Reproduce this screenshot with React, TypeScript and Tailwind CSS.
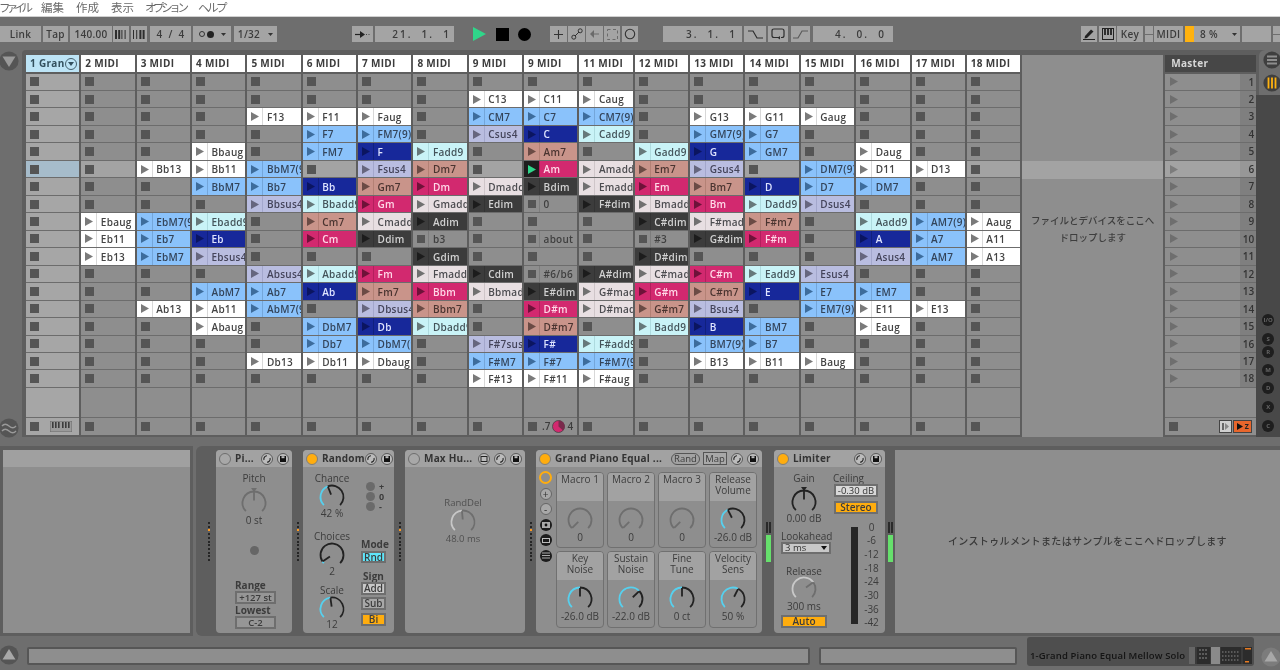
import React from "react";

const COLS: string[] = [
  "",
  "9:Ebaug:w|10:Eb11:w|11:Eb13:w",
  "6:Bb13:w|9:EbM7(9):b|10:Eb7:b|11:EbM7:b|14:Ab13:w",
  "5:Bbaug:w|6:Bb11:w|7:BbM7:b|9:Ebadd9:c|10:Eb:n|11:Ebsus4:l|13:AbM7:b|14:Ab11:w|15:Abaug:w",
  "3:F13:w|6:BbM7(9):b|7:Bb7:b|8:Bbsus4:l|12:Absus4:l|13:Ab7:b|14:AbM7(9):b|17:Db13:w",
  "3:F11:w|4:F7:b|5:FM7:b|7:Bb:n|8:Bbadd9:c|9:Cm7:s|10:Cm:p|12:Abadd9:c|13:Ab:n|15:DbM7:b|16:Db7:b|17:Db11:w",
  "3:Faug:w|4:FM7(9):b|5:F:n|6:Fsus4:l|7:Gm7:s|8:Gm:p|9:Cmadd9:m|10:Ddim:d|12:Fm:p|13:Fm7:s|14:Dbsus4:l|15:Db:n|16:DbM7(9):b|17:Dbaug:w",
  "5:Fadd9:c|6:Dm7:s|7:Dm:p|8:Gmadd9:m|9:Adim:d|10:b3:g|11:Gdim:d|12:Fmadd9:m|13:Bbm:p|14:Bbm7:s|15:Dbadd9:c",
  "2:C13:w|3:CM7:b|4:Csus4:l|7:Dmadd9:m|8:Edim:d|12:Cdim:d|13:Bbmadd9:m|16:F#7sus4:l|17:F#M7:b|18:F#13:w",
  "2:C11:w|3:C7:b|4:C:n|5:Am7:s|6:Am:a|7:Bdim:d|8:0:g|10:about:g|12:#6/b6:g|13:E#dim:d|14:D#m:p|15:D#m7:s|16:F#:n|17:F#7:b|18:F#11:w",
  "2:Caug:w|3:CM7(9):b|4:Cadd9:c|6:Amadd9:m|7:Emadd9:m|8:F#dim:d|12:A#dim:d|13:G#madd9:m|14:D#madd9:m|16:F#add9:c|17:F#M7(9):b|18:F#aug:w",
  "5:Gadd9:c|6:Em7:s|7:Em:p|8:Bmadd9:m|9:C#dim:d|10:#3:g|11:D#dim:d|12:C#madd9:m|13:G#m:p|14:G#m7:s|15:Badd9:c",
  "3:G13:w|4:GM7(9):b|5:G:n|6:Gsus4:l|7:Bm7:s|8:Bm:p|9:F#madd9:m|10:G#dim:d|12:C#m:p|13:C#m7:s|14:Bsus4:l|15:B:n|16:BM7(9):b|17:B13:w",
  "3:G11:w|4:G7:b|5:GM7:b|7:D:n|8:Dadd9:c|9:F#m7:s|10:F#m:p|12:Eadd9:c|13:E:n|15:BM7:b|16:B7:b|17:B11:w",
  "3:Gaug:w|6:DM7(9):b|7:D7:b|8:Dsus4:l|12:Esus4:l|13:E7:b|14:EM7(9):b|17:Baug:w",
  "5:Daug:w|6:D11:w|7:DM7:b|9:Aadd9:c|10:A:n|11:Asus4:l|13:EM7:b|14:E11:w|15:Eaug:w",
  "6:D13:w|9:AM7(9):b|10:A7:b|11:AM7:b|14:E13:w",
  "9:Aaug:w|10:A11:w|11:A13:w",
];

const STYLE: Record<string, { cell: string; arrow: string; sep: string }> = {
  w: { cell: "bg-[#ffffff] text-[#444444]", arrow: "#7a7a7a", sep: "border-[#d8d8d8]" },
  b: { cell: "bg-[#8ac2fb] text-[#33445a]", arrow: "#3d6c9c", sep: "border-[#74a6da]" },
  l: { cell: "bg-[#b9bde0] text-[#44445a]", arrow: "#66667e", sep: "border-[#a3a7cc]" },
  c: { cell: "bg-[#c9f3f7] text-[#44545a]", arrow: "#66787a", sep: "border-[#aedbdf]" },
  n: { cell: "bg-[#17289a] text-[#dfe4ff]", arrow: "#0b1560", sep: "border-[#10207e]" },
  p: { cell: "bg-[#d2296f] text-[#ffd9e8]", arrow: "#6e1239", sep: "border-[#b31f5d]" },
  a: { cell: "bg-[#d2296f] text-[#ffd9e8]", arrow: "#2fd68a", sep: "border-[#b31f5d]" },
  s: { cell: "bg-[#c9948a] text-[#4a3430]", arrow: "#6b4b45", sep: "border-[#b48175]" },
  m: { cell: "bg-[#e8dfe2] text-[#4c4c50]", arrow: "#707070", sep: "border-[#cfc6c9]" },
  d: { cell: "bg-[#3c3c3c] text-[#d2d2d2]", arrow: "#1c1c1c", sep: "border-[#333333]" },
  g: { cell: "bg-[#8e8e8e] text-[#404040]", arrow: "", sep: "border-[#7d7d7d]" },
};

function Arrow({ color, w = 8, h = 9 }: { color: string; w?: number; h?: number }) {
  return (
    <svg width={w} height={h} viewBox="0 0 8 9">
      <path d="M0 0 L8 4.5 L0 9 Z" fill={color} />
    </svg>
  );
}

const Stop = () => <div className="w-[9px] h-[9px] bg-[#555555] shrink-0" />;

function Clip({ label, type }: { label: string; type: string }) {
  const s = STYLE[type];
  return (
    <div className={`h-[17.47px] border-b border-[#6c6c6c] flex items-stretch overflow-hidden ${s.cell}`}>
      <div className={`w-[16px] shrink-0 flex items-center justify-start pl-[4px] border-r ${s.sep} ${type === "a" ? "bg-[#1e1e1e]" : ""}`}>
        {type === "g" ? <div className="w-[8px] h-[8px] bg-[#555555]" /> : <Arrow color={s.arrow} />}
      </div>
      <div className="pl-[3.5px] text-[10px] leading-[16px] tracking-[0.25px] whitespace-nowrap font-semibold pt-[0.5px]">
        {label}
      </div>
    </div>
  );
}

function Empty({ col, row }: { col: number; row: number }) {
  const bg =
    row === 6 ? (col === 0 ? "bg-[#a6bccb]" : "bg-[#a3a3a3]") : col === 0 ? "bg-[#a6a6a6]" : "bg-[#8e8e8e]";
  return (
    <div className={`h-[17.47px] border-b border-[#6c6c6c] flex items-center pl-[4px] ${bg}`}>
      <Stop />
    </div>
  );
}

function Column({ idx, data }: { idx: number; data: string }) {
  const map: Record<number, [string, string]> = {};
  data.split("|").forEach((e) => {
    if (!e) return;
    const [r, l, t] = e.split(":");
    map[Number(r)] = [l, t];
  });
  return (
    <div className="w-[55.35px] shrink-0 border-r-2 border-[#5e5e5e] flex flex-col">
      {idx === 0 ? (
        <div className="h-[17px] mb-[1.5px] bg-[#bde4f6] text-[#33505e] text-[10px] font-bold tracking-[0.3px] leading-[17px] pl-[4px] flex items-center justify-between pr-[2px]">
          <span>1 Gran</span>
          <span className="w-[12px] h-[12px] rounded-full border border-[#44606e] flex items-center justify-center">
            <svg width="6" height="4" viewBox="0 0 6 4"><path d="M0 0 H6 L3 4 Z" fill="#33505e" /></svg>
          </span>
        </div>
      ) : (
        <div className="h-[17px] mb-[1.5px] bg-white text-[#3c3c3c] text-[10px] font-bold tracking-[0.3px] leading-[17px] pl-[4px]">
          {idx === 9 ? "9 MIDI" : `${idx + 1} MIDI`}
        </div>
      )}
      {Array.from({ length: 18 }, (_, i) => i + 1).map((r) =>
        map[r] ? <Clip key={r} label={map[r][0]} type={map[r][1]} /> : <Empty key={r} col={idx} row={r} />
      )}
      <div className={`h-[30.5px] border-b border-[#6c6c6c] ${idx === 0 ? "bg-[#a6a6a6]" : "bg-[#8e8e8e]"}`} />
      <div className={`h-[17px] flex items-center pl-[4px] ${idx === 0 ? "bg-[#a6a6a6]" : "bg-[#8e8e8e]"} ${idx === 9 ? "gap-[3px]" : ""}`}>
        <Stop />
        {idx === 0 && (
          <svg className="ml-[11px]" width="22" height="11" viewBox="0 0 22 11">
            <rect width="22" height="11" fill="#9a9a9a" stroke="#6a6a6a" />
            {[2, 5, 8, 12, 15, 18].map((x) => (
              <rect key={x} x={x} y="1" width="1.6" height="6" fill="#3c3c3c" />
            ))}
          </svg>
        )}
        {idx === 9 && (
          <div className="flex items-center gap-[1.5px] text-[10px] text-[#3c3c3c] font-semibold ml-[2px]">
            <span>.7</span>
            <svg width="13" height="13" viewBox="0 0 13 13">
              <circle cx="6.5" cy="6.5" r="6" fill="#d2296f" stroke="#444" strokeWidth="0.8" />
              <path d="M6.5 6.5 V0.5 A6 6 0 0 1 11 10.5 Z" fill="#7a2a4c" />
            </svg>
            <span className="ml-[1px]">4</span>
          </div>
        )}
      </div>
    </div>
  );
}

function Btn({ w, ml = 2, children, cls = "justify-center" }: { w: number | string; ml?: number; children?: React.ReactNode; cls?: string }) {
  return (
    <div
      className={`h-[16px] shrink-0 bg-[#a4a4a4] flex items-center text-[10px] font-semibold text-[#3c3c3c] ${cls}`}
      style={{ width: w, marginLeft: ml }}
    >
      {children}
    </div>
  );
}

const Caret = () => (
  <svg width="5" height="3" viewBox="0 0 5 3"><path d="M0 0 H5 L2.5 3 Z" fill="#333" /></svg>
);

function Bars({ pattern }: { pattern: number[] }) {
  return (
    <svg width="13" height="9" viewBox="0 0 13 9">
      {pattern.map((w, i) => (
        <rect key={i} x={i * 3.2} y="0" width={w} height="9" fill="#2e2e2e" />
      ))}
    </svg>
  );
}

function Toolbar() {
  return (
    <div className="h-[33px] shrink-0 bg-[#6e6e6e] flex items-center pt-[1px] tracking-[0.3px]">
      <Btn w={41} ml={0}>Link</Btn>
      <Btn w={25}>Tap</Btn>
      <Btn w={42}>140.00</Btn>
      <Btn w={16} ml={1}><Bars pattern={[2, 2, 1, 1]} /></Btn>
      <Btn w={16}><Bars pattern={[1, 1, 2, 2]} /></Btn>
      <Btn w={41} ml={3}>4&nbsp;&nbsp;/&nbsp;&nbsp;4</Btn>
      <Btn w={38} ml={2} cls="justify-center gap-[1px]">
        <span className="w-[6px] h-[6px] rounded-full border border-[#333333]" />
        <span className="w-[7px] h-[7px] rounded-full bg-[#222222] ml-[1px] mr-[6px]" />
        <Caret />
      </Btn>
      <Btn w={43} ml={3} cls="justify-center gap-[8px]">1/32 <Caret /></Btn>
      <Btn w={21} ml={75}>
        <svg width="15" height="7" viewBox="0 0 15 7">
          <path d="M0 3.5 H6" stroke="#222" strokeWidth="1.2" />
          <path d="M5 0 L10 3.5 L5 7 Z" fill="#222" />
          <path d="M11 3.5 H12 M13.5 3.5 H14.5" stroke="#444" strokeWidth="1" />
        </svg>
      </Btn>
      <Btn w={79} cls="tracking-[2px] justify-end pr-[3px]">21.&nbsp;&nbsp;1.&nbsp;&nbsp;1</Btn>
      <svg className="ml-[19px] shrink-0" width="13" height="14" viewBox="0 0 13 14"><path d="M0 0 L13 7 L0 14 Z" fill="#2fd68a" /></svg>
      <div className="w-[13px] h-[13px] bg-black ml-[10px] shrink-0" />
      <div className="w-[13px] h-[13px] rounded-full bg-black ml-[9px] shrink-0" />
      <Btn w={17} ml={19}>
        <svg width="11" height="11" viewBox="0 0 11 11"><path d="M5.5 1 V10 M1 5.5 H10" stroke="#333" strokeWidth="1.1" /></svg>
      </Btn>
      <Btn w={17} ml={1}>
        <svg width="12" height="12" viewBox="0 0 12 12" fill="none" stroke="#333" strokeWidth="1">
          <circle cx="2.8" cy="9.2" r="2" /><circle cx="9.2" cy="2.8" r="2" /><path d="M4 8 L8 4" />
        </svg>
      </Btn>
      <Btn w={17} ml={1}>
        <svg width="10" height="8" viewBox="0 0 10 8"><path d="M4 0 L0 4 L4 8 Z M4 3.4 H9 V4.6 H4 Z" fill="#6a6a6a" /></svg>
      </Btn>
      <Btn w={16} ml={1}>
        <svg width="11" height="11" viewBox="0 0 11 11" fill="none" stroke="#6a6a6a" strokeWidth="1" strokeDasharray="3 2.5"><rect x="0.5" y="0.5" width="10" height="10" /></svg>
      </Btn>
      <Btn w={16} ml={2}>
        <svg width="12" height="12" viewBox="0 0 12 12"><circle cx="6" cy="6" r="4.7" fill="none" stroke="#333" strokeWidth="1.1" /></svg>
      </Btn>
      <Btn w={79} ml={25} cls="tracking-[2px] justify-end pr-[5px]">3.&nbsp;&nbsp;1.&nbsp;&nbsp;1</Btn>
      <Btn w={22} ml={2}>
        <svg width="15" height="9" viewBox="0 0 15 9" fill="none" stroke="#2e2e2e" strokeWidth="1.2"><path d="M0 1 H5 L9 8 H15" /></svg>
      </Btn>
      <Btn w={20} ml={2}>
        <svg width="14" height="12" viewBox="0 0 14 12" fill="none" stroke="#2e2e2e" strokeWidth="1.2"><path d="M8 9.5 H3 Q1 9.5 1 7.5 V3 Q1 1 3 1 H11 Q13 1 13 3 V7.5 Q13 9.5 11 9.5 H10" /><path d="M9 8 V11.5 L6.5 9.7 Z" fill="#2e2e2e" stroke="none" /></svg>
      </Btn>
      <Btn w={19} ml={3}>
        <svg width="15" height="9" viewBox="0 0 15 9" fill="none" stroke="#5a5a5a" strokeWidth="1.2"><path d="M0 8 H5 L9 1 H15" /></svg>
      </Btn>
      <Btn w={80} ml={3} cls="tracking-[2px] justify-end pr-[7px]">4.&nbsp;&nbsp;0.&nbsp;&nbsp;0</Btn>
      <Btn w={16} ml={188}>
        <svg width="12" height="12" viewBox="0 0 12 12"><path d="M2 8 L8 1.5 L10.5 3.5 L4 10 L1.5 10.5 Z" fill="#222" /><path d="M0 11.5 H12" stroke="#222" /></svg>
      </Btn>
      <Btn w={17}>
        <svg width="12" height="12" viewBox="0 0 12 12"><rect x="0.5" y="0.5" width="11" height="11" fill="none" stroke="#222" /><path d="M3 1 V7 M6 1 V7 M9 1 V7" stroke="#222" strokeWidth="1.8" /></svg>
      </Btn>
      <Btn w={26} ml={1}>Key</Btn>
      <div className="w-[8px] ml-[2px] h-[16px] flex flex-col shrink-0 gap-[1px]">
        <div className="h-[7.5px] bg-[#a4a4a4]" />
        <div className="h-[7.5px] bg-[#a4a4a4]" />
      </div>
      <Btn w={29} ml={1}>MIDI</Btn>
      <div className="w-[9px] h-[16px] bg-[#ffb20f] ml-[2px] shrink-0" />
      <Btn w={46} ml={0} cls="justify-between pl-[6px] pr-[3px]"><span>8 %</span><Caret /></Btn>
      <Btn w={29} ml={2} />
      <div className="w-[7px] ml-[2px] h-[16px] flex flex-col shrink-0 gap-[1px]">
        <div className="h-[7.5px] bg-[#a4a4a4]" />
        <div className="h-[7.5px] bg-[#a4a4a4]" />
      </div>
    </div>
  );
}

function Circle({ size = 20, dir = "down", bg = "#555555" }: { size?: number; dir?: "down" | "up" | "wave"; bg?: string }) {
  return (
    <svg width={size} height={size} viewBox="0 0 20 20">
      <circle cx="10" cy="10" r="9.6" fill={bg} />
      {dir === "down" && <path d="M3.5 5.5 H16.5 L10 16 Z" fill="#9a9a9a" />}
      {dir === "up" && <path d="M3.5 14.5 H16.5 L10 4 Z" fill="#a8a8a8" />}
      {dir === "wave" && (
        <path d="M3 8 Q6 4.5 10 8 T17 8 M3 13 Q6 9.5 10 13 T17 13" fill="none" stroke="#9a9a9a" strokeWidth="1.4" />
      )}
    </svg>
  );
}

function Master() {
  return (
    <div className="w-[91px] shrink-0 flex flex-col">
      <div className="h-[17px] mb-[1.5px] bg-[#474747] text-[#d8d8d8] text-[10px] font-bold leading-[17px] pl-[6px] tracking-[0.3px]">Master</div>
      {Array.from({ length: 18 }, (_, i) => i + 1).map((r) => (
        <div key={r} className={`h-[17.47px] border-b border-[#6c6c6c] flex items-center justify-between ${r === 6 ? "bg-[#a3a3a3]" : "bg-[#8e8e8e]"}`}>
          <div className="pl-[5px]"><Arrow color={r === 6 ? "#7c7c7c" : "#6e6e6e"} /></div>
          <div className={`w-[16px] h-full text-right pr-[2px] text-[10px] leading-[17px] font-semibold text-[#333333] ${r === 6 ? "bg-[#979797]" : "bg-[#7f7f7f]"}`}>{r}</div>
        </div>
      ))}
      <div className="h-[30.5px] border-b border-[#6c6c6c] bg-[#8e8e8e]" />
      <div className="h-[17px] bg-[#8e8e8e] flex items-center pl-[4px]">
        <Stop />
        <div className="w-[13px] h-[13px] ml-[41px] border border-[#444444] bg-[#cfcfcf] flex items-center justify-center">
          <svg width="8" height="7" viewBox="0 0 8 7"><rect width="2" height="7" fill="#666" /><path d="M3 0 L7 3.5 L3 7 Z" fill="#888" /></svg>
        </div>
        <div className="w-[19px] h-[13px] ml-[1px] border border-[#444444] bg-[#e8662c] flex items-center justify-center gap-[2px]">
          <svg width="6" height="7" viewBox="0 0 6 7"><path d="M0 0 L6 3.5 L0 7 Z" fill="#111" /></svg>
          <span className="text-[7px] leading-none text-[#222222] font-bold">Z</span>
        </div>
      </div>
    </div>
  );
}

function SmallDot({ t }: { t: string }) {
  return (
    <div className="w-[12px] h-[12px] rounded-full bg-[#1e1e1e] text-[#666666] text-[6px] font-bold flex items-center justify-center leading-none">{t}</div>
  );
}

function Session() {
  return (
    <div className="h-[387px] shrink-0 flex bg-[#6e6e6e]">
      <div className="w-[22px] shrink-0 flex flex-col items-start justify-between pt-[1px]">
        <div className="ml-[-1px]"><Circle dir="down" /></div>
        <div className="mb-[-1px] ml-[-1px]"><Circle dir="wave" /></div>
      </div>
      <div className="flex-1 flex bg-[#5e5e5e] rounded-tl-[4px] pt-[5px] pl-[4px]">
        {COLS.map((d, i) => (
          <Column key={i} idx={i} data={d} />
        ))}
        <div className="w-[141px] shrink-0 bg-[#8e8e8e] flex flex-col">
          <div className="mt-[106px] h-[17.5px] bg-[#a3a3a3]" />
          <div className="mt-[33px] text-center text-[9.5px] leading-[17px] text-[#3e3e3e] font-medium">
            ファイルとデバイスをここへ<br />ドロップします
          </div>
        </div>
        <div className="w-[2px] shrink-0" />
        <Master />
        <div className="flex-1 -mt-[5px] flex flex-col">
          <div className="h-[45px] bg-[#6e6e6e] rounded-tl-[6px] ml-[3px] pl-[4px] pt-[1px] flex flex-col gap-[5px]">
            <svg width="18" height="18" viewBox="0 0 18 18"><circle cx="9" cy="9" r="8.6" fill="#3f3f3f" /><path d="M4 5.5 H14 M4 9 H14 M4 12.5 H14" stroke="#8e8e8e" strokeWidth="1.8" /></svg>
            <svg width="18" height="18" viewBox="0 0 18 18"><circle cx="9" cy="9" r="8.6" fill="#3f3f3f" /><path d="M5.5 3.5 V14.5 M9 3.5 V14.5 M12.5 3.5 V14.5" stroke="#ffb20f" strokeWidth="1.8" /></svg>
          </div>
          <div className="flex-1 bg-[#484848] pl-[6px] pt-[219px] flex flex-col">
            <SmallDot t="I/O" />
            <div className="mt-[7px]"><SmallDot t="S" /></div>
            <div className="mt-[1px]"><SmallDot t="R" /></div>
            <div className="mt-[6px]"><SmallDot t="M" /></div>
            <div className="mt-[6px]"><SmallDot t="D" /></div>
            <div className="mt-[7px]"><SmallDot t="X" /></div>
            <div className="mt-[7px]"><SmallDot t="C" /></div>
          </div>
        </div>
      </div>
    </div>
  );
}

function pt(c: number, r: number, a: number) {
  const t = (a * Math.PI) / 180;
  return [c + r * Math.sin(t), c - r * Math.cos(t)];
}
function arc(c: number, r: number, a: number, b: number) {
  const [x1, y1] = pt(c, r, a);
  const [x2, y2] = pt(c, r, b);
  return `M${x1.toFixed(2)} ${y1.toFixed(2)} A${r} ${r} 0 ${b - a > 180 ? 1 : 0} 1 ${x2.toFixed(2)} ${y2.toFixed(2)}`;
}

function Knob({ v = 0, track = "#222222", fill = "#56d0ee", needle = "#222222", mark = false }: { v?: number; track?: string; fill?: string; needle?: string; mark?: boolean }) {
  const c = 13, r = 11.5;
  const a = -135 + 270 * v;
  const [nx, ny] = pt(c, r - 0.5, a);
  const [sx, sy] = pt(c, 2.5, a);
  return (
    <svg width="26" height="26" viewBox="0 0 26 26" className="shrink-0 block overflow-visible">
      {v > 0 && <path d={arc(c, r, -135, a)} fill="none" stroke={fill} strokeWidth="1.8" />}
      <path d={arc(c, r, a, 135)} fill="none" stroke={track} strokeWidth="1.8" />
      <path d={`M${sx} ${sy} L${nx} ${ny}`} stroke={needle} strokeWidth="1.8" />
      {mark && <path d="M10 -2 H16 L13 2 Z" fill={needle} />}
    </svg>
  );
}

function IconHot() {
  return (
    <svg width="12" height="12" viewBox="0 0 12 12" className="shrink-0">
      <circle cx="6" cy="6" r="5.5" fill="#bcbcbc" stroke="#444" strokeWidth="0.8" />
      <path d="M3 7 A3.2 3.2 0 0 1 6 2.8 M9 5 A3.2 3.2 0 0 1 6 9.2" fill="none" stroke="#222" strokeWidth="1.1" />
    </svg>
  );
}
function IconSave() {
  return (
    <svg width="12" height="12" viewBox="0 0 12 12" className="shrink-0">
      <circle cx="6" cy="6" r="5.5" fill="#bcbcbc" stroke="#444" strokeWidth="0.8" />
      <rect x="3" y="3" width="6" height="6" fill="#111" />
      <rect x="4.5" y="3.2" width="3" height="2" fill="#bcbcbc" />
    </svg>
  );
}

function DevHead({ title, on, children }: { title: string; on?: boolean; children?: React.ReactNode }) {
  return (
    <div className="h-[17px] shrink-0 bg-[#a2a2a2] rounded-t-[4px] flex items-center pl-[3px] pr-[3px]">
      <div className={`w-[12px] h-[12px] rounded-full shrink-0 border ${on ? "bg-[#ffad0e] border-[#7e7e7e]" : "bg-[#a8a8a8] border-[#6e6e6e]"}`} />
      <div className="ml-[4px] text-[10px] font-bold text-[#333333] whitespace-nowrap tracking-[0.2px]">{title}</div>
      <div className="ml-auto flex items-center gap-[4px]">{children}</div>
    </div>
  );
}

function T({ children, cls = "", weight = "font-medium", color = "text-[#3c3c3c]", size = "text-[10px]", lead = "leading-[12px]", align = "text-center" }: { children: React.ReactNode; cls?: string; weight?: string; color?: string; size?: string; lead?: string; align?: string }) {
  return <div className={`${size} ${lead} ${color} ${weight} ${align} whitespace-nowrap ${cls}`}>{children}</div>;
}

function Dots() {
  return (
    <div className="flex flex-col items-center gap-[1.7px]">
      {Array.from({ length: 11 }, (_, i) => (
        <div key={i} className={`w-[2px] h-[2px] ${i === 2 ? "bg-[#ff9a20]" : "bg-[#262626]"}`} />
      ))}
    </div>
  );
}

function GreenMeter() {
  return (
    <div className="flex gap-[1px] h-[40px] flex-col items-center">
      <div className="flex gap-[1px]">
        <div className="w-[2px] h-[11px] bg-[#2a2a2a]" />
        <div className="w-[2px] h-[11px] bg-[#2a2a2a]" />
      </div>
      <div className="w-[5px] h-[27px] bg-[#66e06c] mt-[1px]" />
    </div>
  );
}

function Pitch() {
  return (
    <div className="w-[76px] shrink-0 bg-[#8e8e8e] rounded-[4px] flex flex-col">
      <DevHead title="Pi..."><IconHot /><IconSave /></DevHead>
      <div className="flex flex-col items-center pt-[5px] flex-1">
        <T>Pitch</T>
        <div className="mt-[6px]"><Knob v={0.5} track="#6e6e6e" fill="#6e6e6e" needle="#6e6e6e" mark /></div>
        <T cls="-mt-[2px]">0 st</T>
        <div className="w-[9px] h-[9px] rounded-full bg-[#666666] mt-[20px]" />
        <div className="mt-[24px] self-start ml-[19px] flex flex-col items-start">
          <T weight="font-bold">Range</T>
          <div className="w-[41px] h-[13px] border-2 border-[#6e6e6e] bg-[#969696] text-[9.5px] leading-[10px] text-center font-semibold text-[#3c3c3c]">+127 st</div>
          <T weight="font-bold">Lowest</T>
          <div className="w-[41px] h-[13px] border-2 border-[#6e6e6e] bg-[#969696] text-[9.5px] leading-[10px] text-center font-semibold text-[#3c3c3c]">C-2</div>
        </div>
      </div>
    </div>
  );
}

function SmBtn({ children, bg }: { children: React.ReactNode; bg: string }) {
  return <div className={`w-[25px] h-[12.5px] border-2 border-[#6e6e6e] text-[10px] leading-[8.5px] text-center font-semibold text-[#3c3c3c] ${bg}`}>{children}</div>;
}

function Random() {
  return (
    <div className="w-[91px] shrink-0 bg-[#8e8e8e] rounded-[4px] flex flex-col">
      <DevHead title="Random" on><IconHot /><IconSave /></DevHead>
      <div className="flex flex-1">
        <div className="w-[58px] flex flex-col items-center pt-[5px]">
          <T>Chance</T>
          <Knob v={0.42} />
          <T cls="-mt-[3px]">42 %</T>
          <T cls="mt-[11px]">Choices</T>
          <Knob v={0.04} />
          <T cls="-mt-[3px]">2</T>
          <T cls="mt-[7px]">Scale</T>
          <Knob v={0.47} />
          <T cls="-mt-[4px]">12</T>
        </div>
        <div className="flex-1 flex flex-col items-start pt-[15px]">
          <div className="flex flex-col gap-[0.5px] ml-[5px]">
            {["+", "0", "-"].map((s) => (
              <div key={s} className="flex items-center gap-[4px] h-[9.5px]">
                <div className="w-[9px] h-[9px] rounded-full bg-[#6a6a6a]" />
                <span className="text-[9px] leading-[9px] font-bold text-[#3c3c3c]">{s}</span>
              </div>
            ))}
          </div>
          <T cls="mt-[26px] w-[25px]" weight="font-bold">Mode</T>
          <div className="mt-[1px]"><SmBtn bg="bg-[#5fe6fb]">Rnd</SmBtn></div>
          <T cls="mt-[6.5px] w-[25px]" weight="font-bold">Sign</T>
          <div className="mt-[0.5px]"><SmBtn bg="bg-[#c8c8c8]">Add</SmBtn></div>
          <div className="mt-[2.5px]"><SmBtn bg="bg-[#a8a8a8]">Sub</SmBtn></div>
          <div className="mt-[3.5px]"><SmBtn bg="bg-[#ffad0e]">Bi</SmBtn></div>
        </div>
      </div>
    </div>
  );
}

function MaxHu() {
  return (
    <div className="w-[120px] shrink-0 bg-[#8e8e8e] rounded-[4px] flex flex-col">
      <DevHead title="Max Hu...">
        <svg width="12" height="12" viewBox="0 0 12 12" className="shrink-0"><circle cx="6" cy="6" r="5.5" fill="#bcbcbc" stroke="#444" strokeWidth="0.8" /><rect x="3" y="3.5" width="6" height="5" fill="none" stroke="#222" /></svg>
        <IconHot /><IconSave />
      </DevHead>
      <div className="flex flex-col items-center pt-[30px] pr-[4px]">
        <T color="text-[#505050]" size="text-[9.5px]">RandDel</T>
        <Knob v={0.48} track="#6e6e6e" fill="#c8c8c8" needle="#6e6e6e" />
        <T cls="-mt-[2px]" color="text-[#505050]" size="text-[9.5px]">48.0 ms</T>
      </div>
    </div>
  );
}

function Macro({ top, value, v, cyan }: { top: string[]; value: string; v?: number; cyan?: boolean }) {
  return (
    <div className="w-[48px] border-[1.5px] border-[#707070] rounded-[4px] overflow-hidden flex flex-col bg-[#8e8e8e]">
      <div className="h-[28px] bg-[#a2a2a2] flex flex-col items-center pt-[0.5px]">
        {top.map((t) => (
          <T key={t} lead="leading-[11px]">{t}</T>
        ))}
      </div>
      <div className="flex flex-col items-center pt-[5.5px]">
        {cyan ? <Knob v={v} /> : <Knob v={0} track="#6e6e6e" needle="#6e6e6e" />}
        <T cls="-mt-[2px]">{value}</T>
      </div>
    </div>
  );
}

function RailDot({ children, light }: { children?: React.ReactNode; light?: boolean }) {
  return (
    <div className={`w-[12px] h-[12px] rounded-full flex items-center justify-center ${light ? "bg-[#a8a8a8] border border-[#666666]" : "bg-[#1c1c1c]"}`}>{children}</div>
  );
}

function Piano() {
  return (
    <div className="w-[226px] shrink-0 bg-[#8e8e8e] rounded-[4px] flex flex-col">
      <DevHead title="Grand Piano Equal ..." on>
        <div className="ml-[-2px] w-[29px] h-[12px] rounded-full border border-[#555555] text-[9.5px] leading-[10px] text-center font-medium text-[#3c3c3c]">Rand</div>
        <div className="w-[24px] h-[13px] border border-[#555555] bg-[#a8a8a8] text-[9.5px] leading-[11px] text-center font-medium text-[#3c3c3c] -ml-[1px]">Map</div>
        <IconHot /><IconSave />
      </DevHead>
      <div className="flex flex-1 pt-[5px]">
        <div className="w-[20px] pl-[1px] pr-[2px] flex flex-col items-center gap-[3.5px] -mt-[1px]">
          <div className="w-[13px] h-[13px] rounded-full border-2 border-[#ffad0e] shrink-0" />
          <RailDot light><span className="text-[10px] leading-none text-[#333333]">+</span></RailDot>
          <RailDot light><span className="text-[10px] leading-none text-[#333333]">-</span></RailDot>
          <RailDot><svg width="8" height="7" viewBox="0 0 8 7"><rect x="0" y="1" width="8" height="6" fill="#aaa" /><circle cx="4" cy="4" r="1.4" fill="#111" /></svg></RailDot>
          <RailDot><div className="w-[8px] h-[5px] border border-[#bbbbbb]" /></RailDot>
          <RailDot><svg width="8" height="7" viewBox="0 0 8 7"><path d="M0 1 H8 M0 3.5 H8 M0 6 H8" stroke="#aaa" /></svg></RailDot>
        </div>
        <div className="grid grid-cols-[48px_48px_48px_48px] grid-rows-[76px_77px] gap-x-[3px] gap-y-[3px]">
          <Macro top={["Macro 1"]} value="0" />
          <Macro top={["Macro 2"]} value="0" />
          <Macro top={["Macro 3"]} value="0" />
          <Macro top={["Release", "Volume"]} value="-26.0 dB" v={0.4} cyan />
          <Macro top={["Key", "Noise"]} value="-26.0 dB" v={0.5} cyan />
          <Macro top={["Sustain", "Noise"]} value="-22.0 dB" v={0.67} cyan />
          <Macro top={["Fine", "Tune"]} value="0 ct" v={0.5} cyan />
          <Macro top={["Velocity", "Sens"]} value="50 %" v={0.6} cyan />
        </div>
      </div>
    </div>
  );
}

function Limiter() {
  const scale = ["0", "-6", "-12", "-18", "-24", "-30", "-36", "-42"];
  return (
    <div className="w-[111px] shrink-0 bg-[#8e8e8e] rounded-[4px] flex flex-col">
      <DevHead title="Limiter" on><IconHot /><IconSave /></DevHead>
      <div className="flex flex-1">
        <div className="w-[59px] pl-[7px] flex flex-col pt-[5px]">
          <div className="w-[46px] flex flex-col items-center">
            <T>Gain</T>
            <div className="mt-[5px]"><Knob v={0.5} mark track="#222222" fill="#222222" /></div>
            <T cls="-mt-[3px]">0.00 dB</T>
          </div>
          <T cls="mt-[6px]" align="text-left">Lookahead</T>
          <div className="w-[50px] h-[12px] border-2 border-[#6e6e6e] bg-[#c8c8c8] flex items-center justify-between px-[2px] text-[9.5px] leading-none text-[#333333] font-medium">
            3 ms <svg width="6" height="4" viewBox="0 0 6 4"><path d="M0 0 H6 L3 4 Z" fill="#111" /></svg>
          </div>
          <div className="w-[46px] flex flex-col items-center mt-[11px]">
            <T>Release</T>
            <div className="-mt-[1px]"><Knob v={0.7} track="#6e6e6e" fill="#c8c8c8" needle="#6e6e6e" /></div>
            <T cls="-mt-[2px]">300 ms</T>
          </div>
          <div className="mt-[3px] w-[46px] h-[13px] border-2 border-[#6e6e6e] bg-[#ffad0e] text-[10px] leading-[9px] text-center font-semibold text-[#3c3c3c]">Auto</div>
        </div>
        <div className="flex-1 flex flex-col pt-[5px]">
          <T align="text-left">Ceiling</T>
          <div className="w-[44px] ml-[1px] h-[13px] border-2 border-[#6e6e6e] bg-[#d8d8d8] text-[9.5px] leading-[9px] text-center font-medium text-[#333333]">-0.30 dB</div>
          <div className="w-[44px] ml-[1px] h-[13px] border-2 border-[#6e6e6e] bg-[#ffad0e] text-[10px] leading-[9px] text-center font-semibold text-[#3c3c3c] mt-[4px]">Stereo</div>
          <div className="flex mt-[13px] pl-[18px]">
            <div className="w-[7px] h-[97px] bg-[#262626] shrink-0" />
            <div className="ml-[5px] w-[17px] flex flex-col items-center justify-between -mt-[5.5px] h-[107px]">
              {scale.map((s) => (
                <div key={s} className="text-[10px] leading-[11px] text-[#3c3c3c] font-medium">{s}</div>
              ))}
            </div>
          </div>
        </div>
      </div>
    </div>
  );
}

function Sep({ w = 11, children }: { w?: number; children: React.ReactNode }) {
  return (
    <div className="shrink-0 flex items-center justify-center" style={{ width: w }}>
      {children}
    </div>
  );
}

function DeviceRow() {
  return (
    <div className="h-[190px] shrink-0 flex mt-[9px]">
      <div className="w-[193px] shrink-0 bg-[#5e5e5e] pl-[3px] pt-[4px] pb-[3px] pr-[3px] flex">
        <div className="flex-1 bg-[#8e8e8e] flex flex-col">
          <div className="h-[17px] bg-[#a0a0a0]" />
        </div>
      </div>
      <div className="w-[3px] shrink-0" />
      <div className="flex-1 flex bg-[#5e5e5e] rounded-tl-[6px] rounded-bl-[6px] pt-[4px] pb-[3px] pl-[6px]">
        <Sep w={13}><Dots /></Sep>
        <div className="w-[1px] shrink-0" />
        <Pitch />
        <Sep><Dots /></Sep>
        <Random />
        <Sep><Dots /></Sep>
        <MaxHu />
        <Sep><Dots /></Sep>
        <Piano />
        <Sep w={12}><GreenMeter /></Sep>
        <Limiter />
        <Sep w={10}><GreenMeter /></Sep>
        <div className="flex-1 bg-[#8e8e8e] flex items-center justify-center text-[10px] text-[#3a3a3a] font-medium tracking-[0.35px]">
          インストゥルメントまたはサンプルをここへドロップします
        </div>
      </div>
    </div>
  );
}

function Thumb() {
  return (
    <svg width="63" height="17" viewBox="0 0 63 17" className="shrink-0">
      <rect width="63" height="17" fill="#3a3a3a" />
      <rect x="0" width="6" height="17" fill="#666" />
      <rect x="8" width="13" height="17" fill="#2c2c2c" />
      <path d="M10 3 H19 M10 7 H19 M10 11 H19" stroke="#8a8a8a" strokeWidth="1" strokeDasharray="2 1" />
      <rect x="32" width="20" height="17" fill="#2c2c2c" />
      <path d="M33 5 H51 M33 9 H51 M33 13 H51" stroke="#888" strokeWidth="1" strokeDasharray="1.5 1.5" />
      <rect x="54" width="9" height="17" fill="#2c2c2c" />
      <rect x="56" y="1" width="6" height="1.5" fill="#e87a20" />
      <rect x="56" y="14" width="4" height="1.5" fill="#e87a20" />
      <rect x="22" width="9" height="17" fill="#8a8a8a" />
    </svg>
  );
}

function Status() {
  return (
    <div className="flex-1 flex items-start bg-[#6e6e6e]">
      <div className="w-[27px] shrink-0 mt-[9px] -ml-[1px]"><Circle dir="up" /></div>
      <div className="w-[783px] h-[18px] mt-[11px] ml-[1px] bg-[#8e8e8e] border-2 border-[#565656] rounded-[2px] shrink-0" />
      <div className="w-[198px] h-[18px] mt-[11px] ml-[9px] bg-[#8e8e8e] border-2 border-[#565656] rounded-[2px] shrink-0" />
      <div className="w-[227px] h-[29px] mt-[1px] ml-[10px] bg-[#4e4e4e] rounded-[3px] shrink-0 flex items-end pb-[2px] pl-[3px]">
        <span className="w-[159px] shrink-0 text-[9.5px] leading-[17px] font-semibold text-[#141414] whitespace-nowrap tracking-[0.15px]">1-Grand Piano Equal Mellow Solo</span>
        <Thumb />
      </div>
      <div className="mt-[11px] ml-[7px]"><Circle dir="up" bg="#7c7c7c" /></div>
    </div>
  );
}

export default function App() {
  return (
    <div className="w-[1280px] h-[670px] overflow-hidden bg-[#6e6e6e] flex flex-col font-['Open_Sans','Noto_Sans_CJK_JP',sans-serif] blur-[0.35px]">
      <div className="h-[17px] shrink-0 bg-white border-b border-[#d0d0d0] flex items-center pb-[2px] text-[11.5px] leading-[14px] text-[#6a6a6a] whitespace-nowrap font-['Noto_Sans_CJK_JP',sans-serif]">
        <span className="-ml-[1px] w-[42px] tracking-[-4px]">ファイル</span>
        <span className="w-[35px]">編集</span>
        <span className="w-[35px]">作成</span>
        <span className="w-[34px]">表示</span>
        <span className="w-[53px] tracking-[-3.4px]">オプション</span>
        <span className="tracking-[-2.5px]">ヘルプ</span>
      </div>
      <Toolbar />
      <Session />
      <DeviceRow />
      <Status />
    </div>
  );
}
